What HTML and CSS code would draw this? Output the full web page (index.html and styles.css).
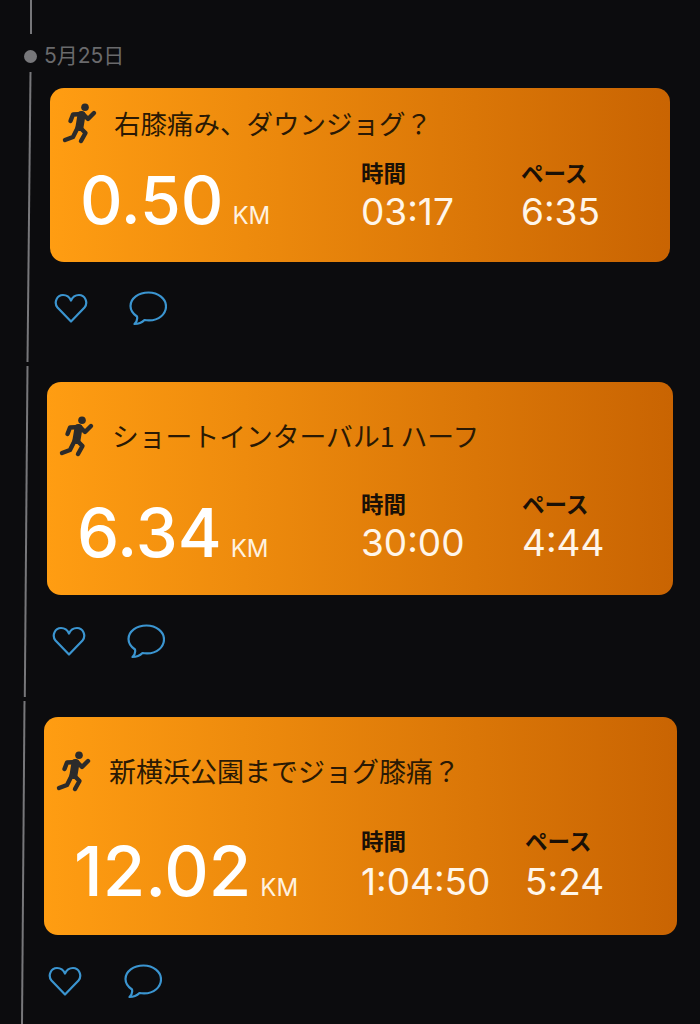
FILE: index.html
```html
<!DOCTYPE html>
<html lang="ja">
<head>
    <meta charset="UTF-8">
    <meta name="viewport" content="width=device-width, initial-scale=1.0">
    <title>ランニング記録</title>
    <link rel="stylesheet" href="styles.css">
</head>
<body>
    <!-- タイムラインの線 -->
    <svg class="rail" viewBox="0 0 700 1024" aria-hidden="true">
        <line x1="31" y1="0" x2="31" y2="34"></line>
        <line x1="30.5" y1="72" x2="27.5" y2="362"></line>
        <line x1="27.5" y1="366" x2="24.8" y2="697"></line>
        <line x1="24.5" y1="701" x2="22" y2="1024"></line>
    </svg>

    <div class="date-row">
        <span class="date-dot"></span>
        <span class="date-text">5月25日</span>
    </div>

    <section class="post post-first">
        <div class="card">
            <div class="card-title">
                <svg class="run-icon" viewBox="0 0 40 45">
                    <circle cx="25" cy="7.3" r="3.8" class="run-head"></circle>
                    <path class="run-limb" d="M10.5 21 13 14.5 23 14 28 19 34 13"></path>
                    <path class="run-body" d="M21.5 15 19.5 27"></path>
                    <path class="run-limb" d="M19.5 27 25.5 33 21 41"></path>
                    <path class="run-limb" d="M18 27 13 37 5 40"></path>
                </svg>
                <h2>右膝痛み、ダウンジョグ？</h2>
            </div>
            <div class="stats">
                <div class="distance"><span class="distance-num">0.50</span><span class="distance-unit">KM</span></div>
                <div class="stat stat-time"><div class="stat-label">時間</div><div class="stat-value">03:17</div></div>
                <div class="stat stat-pace"><div class="stat-label">ペース</div><div class="stat-value">6:35</div></div>
            </div>
        </div>
        <div class="actions">
            <svg class="heart" viewBox="0 0 34 30"><path d="M17 28.5 3.5 14.500C-.5 9.500 3 2 9 2c3.500 0 6.500 2 8 5.500C18.500 4 21.500 2 25 2c6 0 9.500 7.500 5.500 12.500Z"></path></svg>
            <svg class="bubble" viewBox="0 0 38 35"><path d="M19.500 1.500C9.500 1.500 1.500 7.500 1.500 15c0 4.500 2.800 8 6.500 10.500.6 2.500-.5 5.500-2.500 7.500 4 0 7.500-1.500 10-4 1.500.3 2.800.4 4.500.4 10 0 17-6.500 17-14S29.500 1.500 19.500 1.500Z"></path></svg>
        </div>
    </section>

    <section class="post post-second">
        <div class="card">
            <div class="card-title">
                <svg class="run-icon" viewBox="0 0 40 45">
                    <circle cx="25" cy="7.3" r="3.8" class="run-head"></circle>
                    <path class="run-limb" d="M10.5 21 13 14.5 23 14 28 19 34 13"></path>
                    <path class="run-body" d="M21.5 15 19.5 27"></path>
                    <path class="run-limb" d="M19.5 27 25.5 33 21 41"></path>
                    <path class="run-limb" d="M18 27 13 37 5 40"></path>
                </svg>
                <h2>ショートインターバル1 ハーフ</h2>
            </div>
            <div class="stats">
                <div class="distance"><span class="distance-num">6.34</span><span class="distance-unit">KM</span></div>
                <div class="stat stat-time"><div class="stat-label">時間</div><div class="stat-value">30:00</div></div>
                <div class="stat stat-pace"><div class="stat-label">ペース</div><div class="stat-value">4:44</div></div>
            </div>
        </div>
        <div class="actions">
            <svg class="heart" viewBox="0 0 34 30"><path d="M17 28.5 3.5 14.500C-.5 9.500 3 2 9 2c3.500 0 6.500 2 8 5.500C18.500 4 21.500 2 25 2c6 0 9.500 7.500 5.500 12.500Z"></path></svg>
            <svg class="bubble" viewBox="0 0 38 35"><path d="M19.500 1.500C9.500 1.500 1.500 7.500 1.500 15c0 4.500 2.800 8 6.500 10.500.6 2.500-.5 5.500-2.500 7.500 4 0 7.500-1.500 10-4 1.500.3 2.800.4 4.500.4 10 0 17-6.500 17-14S29.500 1.500 19.500 1.500Z"></path></svg>
        </div>
    </section>

    <section class="post post-third">
        <div class="card">
            <div class="card-title">
                <svg class="run-icon" viewBox="0 0 40 45">
                    <circle cx="25" cy="7.3" r="3.8" class="run-head"></circle>
                    <path class="run-limb" d="M10.5 21 13 14.5 23 14 28 19 34 13"></path>
                    <path class="run-body" d="M21.5 15 19.5 27"></path>
                    <path class="run-limb" d="M19.5 27 25.5 33 21 41"></path>
                    <path class="run-limb" d="M18 27 13 37 5 40"></path>
                </svg>
                <h2>新横浜公園までジョグ膝痛？</h2>
            </div>
            <div class="stats">
                <div class="distance"><span class="distance-num">12.02</span><span class="distance-unit">KM</span></div>
                <div class="stat stat-time"><div class="stat-label">時間</div><div class="stat-value">1:04:50</div></div>
                <div class="stat stat-pace"><div class="stat-label">ペース</div><div class="stat-value">5:24</div></div>
            </div>
        </div>
        <div class="actions">
            <svg class="heart" viewBox="0 0 34 30"><path d="M17 28.5 3.5 14.500C-.5 9.500 3 2 9 2c3.500 0 6.500 2 8 5.500C18.500 4 21.500 2 25 2c6 0 9.500 7.500 5.500 12.500Z"></path></svg>
            <svg class="bubble" viewBox="0 0 38 35"><path d="M19.500 1.500C9.500 1.500 1.500 7.500 1.500 15c0 4.500 2.800 8 6.500 10.500.6 2.500-.5 5.500-2.500 7.500 4 0 7.500-1.500 10-4 1.500.3 2.800.4 4.500.4 10 0 17-6.500 17-14S29.500 1.500 19.500 1.500Z"></path></svg>
        </div>
    </section>
</body>
</html>
```

FILE: styles.css
```css
html {
    background: #0c0c0e;
}

body {
    background: #0c0c0e;
    font-family: Inter, 'Noto Sans CJK JP', sans-serif;
    margin: 0;
    height: 1024px;
    overflow: hidden;
    position: relative;
}

.rail {
    position: absolute;
    top: 0;
    left: 0;
    width: 700px;
    height: 1024px;
}

.rail line {
    stroke: #77777a;
    stroke-width: 2;
}

.date-row {
    display: flex;
    align-items: center;
    gap: 7px;
    height: 26px;
    padding: 43px 0 0 24px;
    position: relative;
}

.date-dot {
    width: 13px;
    height: 13px;
    border-radius: 50%;
    background: #77777a;
}

.date-text {
    color: #6a6a6c;
    font-size: 21px;
    line-height: 24px;
    font-family: Inter, 'Noto Sans CJK JP', sans-serif;
}

.post {
    position: relative;
}

.post-first {
    margin: 19px 30px 56px 50px;
    --title-top: 12px;
    --title-size: 26.5px;
    --title-gap: 14px;
    --stats-gap: 13px;
    --card-bottom: 26px;
    --time-left: 281px;
    --pace-left: 160px;
    --value-gap: 2px;
    --distance-size: 66px;
    --distance-line: 84px;
    --action-left: 4px;
    --action-gap: 41px;
}

.post-second {
    margin: 0 27px 58px 47px;
    --title-top: 31px;
    --title-size: 26.8px;
    --title-gap: 15px;
    --stats-gap: 31px;
    --card-bottom: 28px;
    --time-left: 284px;
    --pace-left: 161px;
    --value-gap: 2px;
    --distance-size: 67px;
    --distance-line: 88px;
    --action-left: 5px;
    --action-gap: 41px;
}

.post-third {
    margin: 0 23px 0 44px;
    --title-top: 31px;
    --title-size: 27px;
    --title-gap: 15px;
    --stats-gap: 33px;
    --card-bottom: 29px;
    --time-left: 287px;
    --pace-left: 164px;
    --value-gap: 4px;
    --distance-size: 69px;
    --distance-line: 90px;
    --action-left: 4px;
    --action-gap: 42px;
}

.card {
    background: linear-gradient(90deg, #ff9d12, #c96402);
    border-radius: 14px;
    padding: var(--title-top) 0 var(--card-bottom) 0;
}

.card-title {
    display: flex;
    align-items: center;
    gap: var(--title-gap);
    padding-left: 10px;
}

.card-title h2 {
    margin: 0;
    color: #2a1904;
    font-size: var(--title-size);
    font-weight: 400;
    line-height: 45px;
    font-family: 'Noto Sans CJK JP', sans-serif;
}

.run-icon {
    width: 40px;
    height: 45px;
    flex: none;
}

.run-head {
    fill: #2b2b2b;
}

.run-limb {
    fill: none;
    stroke: #2b2b2b;
    stroke-width: 4.4;
    stroke-linecap: round;
    stroke-linejoin: round;
}

.run-body {
    fill: none;
    stroke: #2b2b2b;
    stroke-width: 8;
    stroke-linecap: round;
}

.stats {
    display: flex;
    margin-top: var(--stats-gap);
    padding-left: 30px;
    height: calc(76px + var(--value-gap));
}

.distance {
    width: var(--time-left);
    display: flex;
    align-items: baseline;
    color: #fff;
    line-height: var(--distance-line);
}

.distance-num {
    font-size: var(--distance-size);
    font-weight: 500;
}

.distance-unit {
    font-size: 24px;
    margin-left: 9px;
    color: #fff2e0;
}

.stat-time {
    width: var(--pace-left);
}

.stat-label {
    color: #1a1006;
    font-size: 22.5px;
    font-weight: 700;
    line-height: 28px;
    font-family: 'Noto Sans CJK JP', sans-serif;
}

.stat-value {
    color: #fff6ea;
    font-size: 37px;
    line-height: 48px;
    margin-top: var(--value-gap);
}

.actions {
    display: flex;
    align-items: center;
    gap: var(--action-gap);
    height: 36px;
    margin-top: 28px;
    padding-left: var(--action-left);
}

.heart {
    width: 34px;
    height: 30px;
}

.bubble {
    width: 38px;
    height: 35px;
}

.heart path,
.bubble path {
    fill: none;
    stroke: #3b95d0;
    stroke-width: 2.2;
    stroke-linejoin: round;
}
```
